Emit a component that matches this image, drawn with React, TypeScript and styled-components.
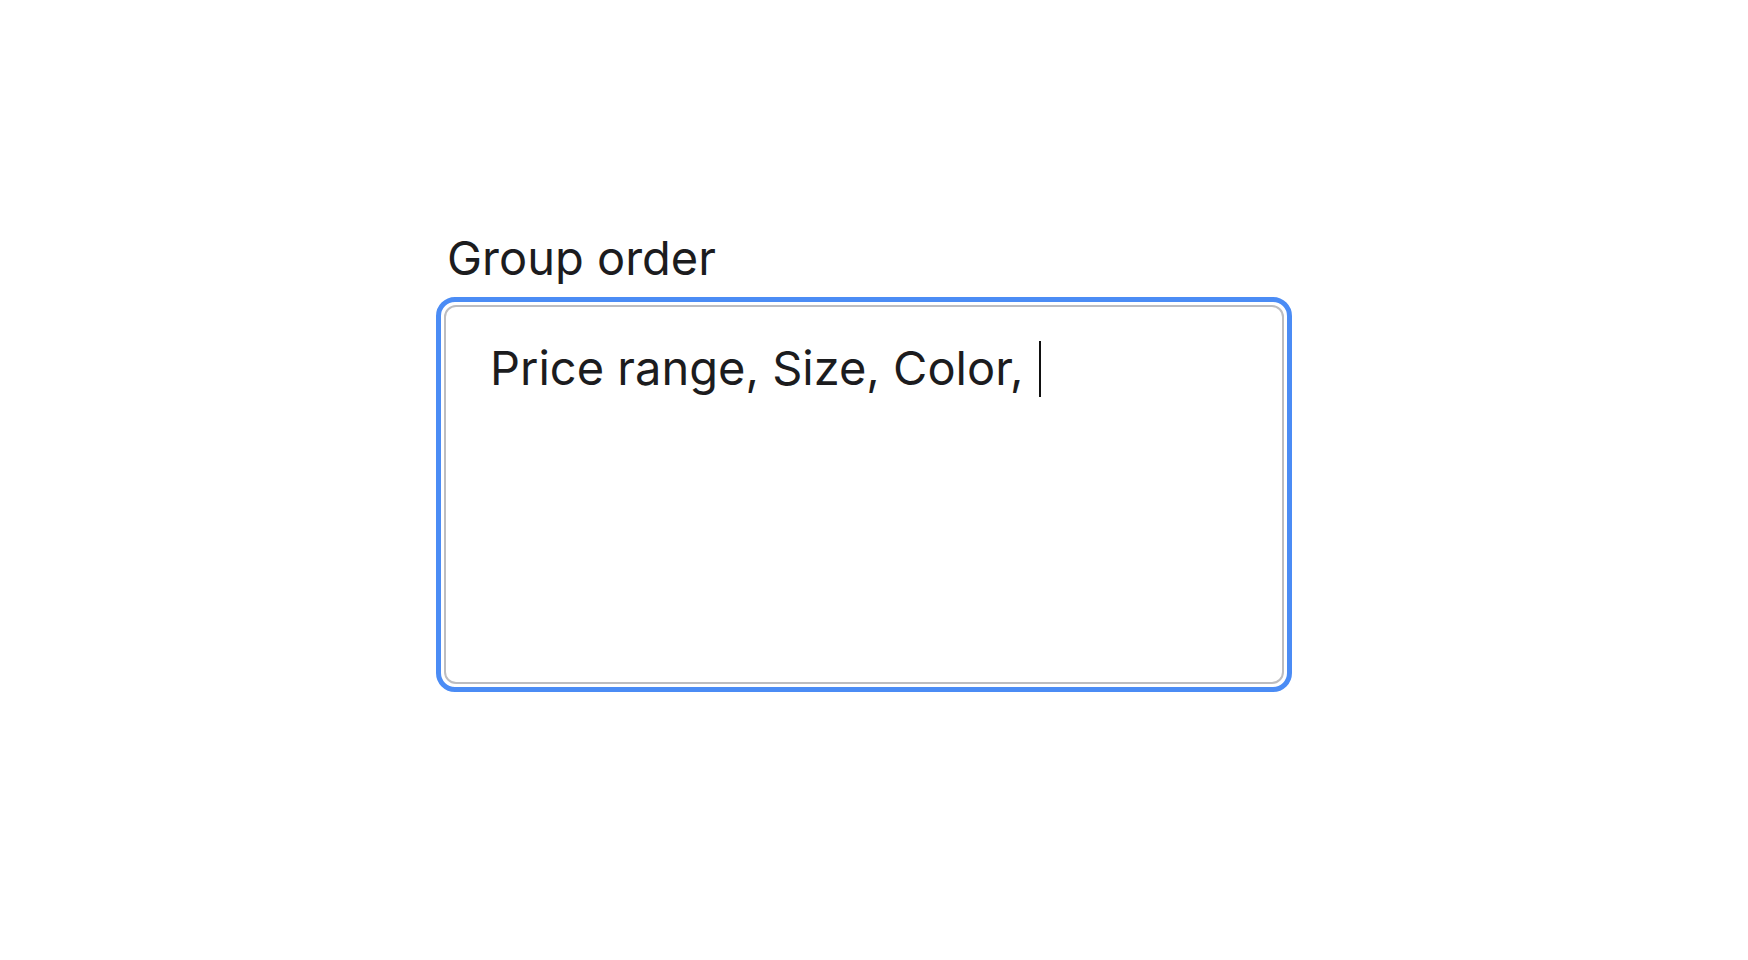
import React from "react"
import styled, { createGlobalStyle } from "styled-components"

const GlobalStyle = createGlobalStyle`
    html, body {
        margin: 0;
        padding: 0;
        background: #ffffff;
    }
    body {
        font-family: Inter, "Noto Sans", "Liberation Sans", sans-serif;
        color: #1c1c1e;
    }
`

const Page = styled.div`
    width: 1748px;
    height: 960px;
    box-sizing: border-box;
    padding: 228px 0 0 436px;
`

const Field = styled.div`
    display: flex;
    flex-direction: column;
    width: 856px;
`

const Label = styled.label`
    font-size: 47px;
    line-height: 60px;
    padding-left: 11px;
    margin-bottom: 9px;
`

const FocusRing = styled.div`
    border: 5px solid #4b8cf5;
    border-radius: 19px;
    padding: 3px;
`

const TextBox = styled.div`
    height: 379px;
    box-sizing: border-box;
    border: 2px solid #bdbdc0;
    border-radius: 12px;
    padding: 32px 44px 28px;
    font-size: 47px;
    line-height: 58px;
    background: #fff;
    white-space: pre-wrap;
`

const Caret = styled.span`
    display: inline-block;
    width: 2px;
    height: 56px;
    margin-left: 2px;
    vertical-align: -12px;
    background: #111;
`

const App: React.FC = () => (
    <>
        <GlobalStyle />
        <Page>
            <Field>
                <Label htmlFor="group-order">Group order</Label>
                <FocusRing>
                    <TextBox id="group-order" role="textbox">
                        {"Price range, Size, Color, "}
                        <Caret />
                    </TextBox>
                </FocusRing>
            </Field>
        </Page>
    </>
)

export default App
